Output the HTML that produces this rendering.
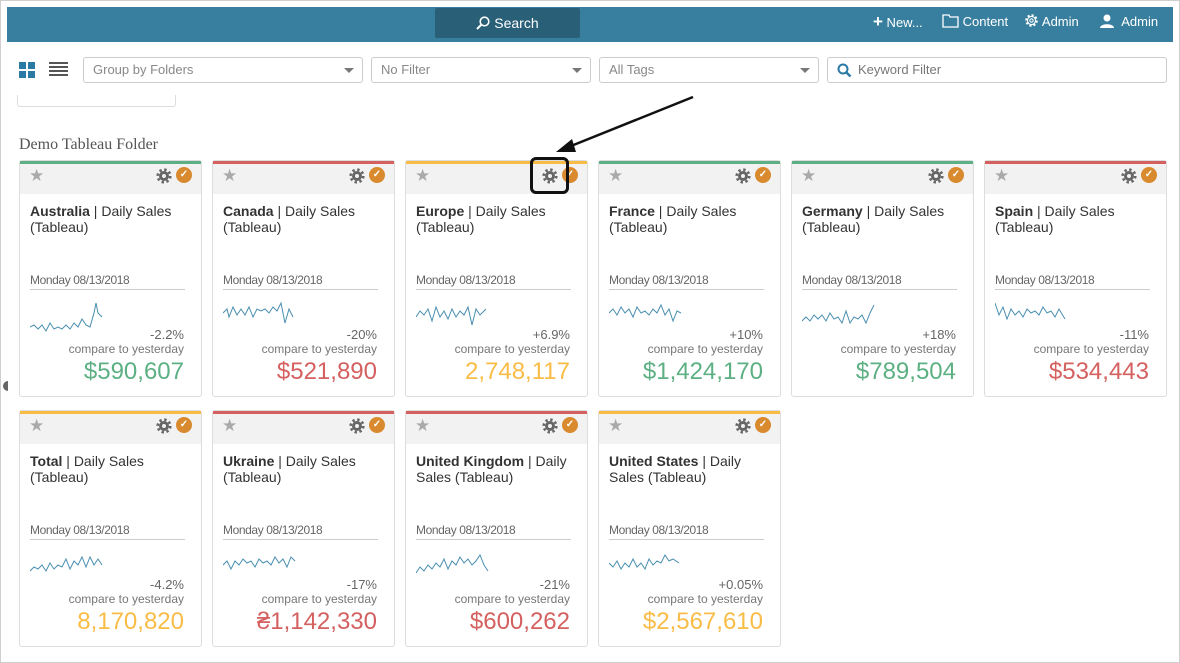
<!DOCTYPE html>
<html><head><meta charset="utf-8"><style>
*{box-sizing:border-box;margin:0;padding:0}
body{width:1180px;height:663px;background:#fff;font-family:"Liberation Sans",sans-serif;position:relative;overflow:hidden}
.frame{position:absolute;left:0;top:0;width:1180px;height:663px;border:1px solid #cfcfcf;pointer-events:none}
.hdr{position:absolute;left:7px;top:7px;width:1166px;height:35px;background:#387f9f}
.search{position:absolute;left:428px;top:1px;width:145px;height:30px;background:#2a5f78;border-radius:2px;color:#fff;font-size:14px;text-align:center;line-height:30px}
.nav{position:absolute;top:0;color:#fff;font-size:13px;line-height:29px}
.sel{position:absolute;top:57px;height:26px;border:1px solid #ccc;border-radius:3px;font-size:13px;color:#888;line-height:24px;padding-left:9px}
.sel .c{position:absolute;right:8px;top:10px;border-left:5px solid transparent;border-right:5px solid transparent;border-top:5px solid #777}
.card{position:absolute;width:183px;height:237px;border:1px solid #ddd;border-radius:3px;background:#fff}
.card .bar{height:33px;background:#f2f2f2;border-top:3px solid}
.star{position:absolute;left:9px;top:5px;color:#aaa;font-size:17px}
.gear{position:absolute;left:136px;top:7px;width:16px;height:16px}
.chk{position:absolute;left:156px;top:6px;width:16px;height:16px;border-radius:50%;background:#d98a2e;color:#fff;font-size:10px;text-align:center;line-height:16px;font-weight:bold}
.t{position:absolute;left:10px;top:42px;width:168px;font-size:14px;line-height:16px;color:#333}
.d{position:absolute;left:10px;top:112px;width:155px;font-size:12px;color:#666;letter-spacing:-.4px;border-bottom:1px solid #ccc;padding-bottom:2px}
.sp{position:absolute;left:10px;top:140px}
.p{position:absolute;right:17px;top:166px;font-size:13px;color:#666}
.cmp{position:absolute;right:17px;top:181px;font-size:12px;color:#777}
.v{position:absolute;right:17px;top:197px;font-size:24px}
.g{color:#5cb083}.r{color:#d4605f}.y{color:#f9bc46}
</style></head><body>
<div class="hdr">
<div class="search"><svg width="14" height="14" viewBox="0 0 14 14" style="vertical-align:-2px"><circle cx="8.5" cy="5.5" r="4.3" fill="none" stroke="#fff" stroke-width="1.6"/><line x1="5.5" y1="8.5" x2="1" y2="13" stroke="#fff" stroke-width="2"/></svg> Search</div>
<div class="nav" style="left:866px"><b style="font-size:17px">+</b> New...</div>
<div class="nav" style="left:935px"><svg width="17" height="14" viewBox="0 0 17 14" style="vertical-align:-2px"><path d="M1 1h6l1 2h8v10H1z" fill="none" stroke="#fff" stroke-width="1.3"/></svg> Content</div>
<div class="nav" style="left:1017px"><svg width="15" height="15" viewBox="0 0 16 16" style="vertical-align:-2px"><circle cx="8" cy="8" r="5.5" fill="none" stroke="#fff" stroke-width="2.4" stroke-dasharray="2.2 2.1"/><circle cx="8" cy="8" r="4.3" fill="none" stroke="#fff" stroke-width="1.2"/><circle cx="8" cy="8" r="1.8" fill="none" stroke="#fff" stroke-width="1.1"/></svg> Admin</div>
<div class="nav" style="left:1093px"><svg width="14" height="14" viewBox="0 0 14 14" style="vertical-align:-2px"><circle cx="7" cy="4" r="3.5" fill="#fff"/><path d="M0 14c0-5 14-5 14 0z" fill="#fff"/></svg> &nbsp;Admin</div>
</div>
<svg style="position:absolute;left:19px;top:62px" width="16" height="16"><rect x="0" y="0" width="7" height="7" fill="#2b7aa6"/><rect x="9" y="0" width="7" height="7" fill="#2b7aa6"/><rect x="0" y="9" width="7" height="7" fill="#2b7aa6"/><rect x="9" y="9" width="7" height="7" fill="#2b7aa6"/></svg>
<svg style="position:absolute;left:49px;top:62px" width="19" height="16"><g fill="#555"><rect y="0" width="19" height="2"/><rect y="4" width="19" height="2"/><rect y="8" width="19" height="2"/><rect y="12" width="19" height="2"/></g></svg>
<div class="sel" style="left:83px;width:280px">Group by Folders<span class="c"></span></div>
<div class="sel" style="left:371px;width:220px">No Filter<span class="c"></span></div>
<div class="sel" style="left:599px;width:220px">All Tags<span class="c"></span></div>
<div class="sel" style="left:827px;width:340px;padding-left:30px;color:#777">Keyword Filter<svg style="position:absolute;left:9px;top:5px" width="15" height="15"><circle cx="6" cy="6" r="4.5" fill="none" stroke="#2b7aa6" stroke-width="2"/><line x1="9.5" y1="9.5" x2="13.5" y2="13.5" stroke="#2b7aa6" stroke-width="2.4"/></svg></div>
<div style="position:absolute;left:17px;top:95px;width:159px;height:12px;border:1px solid #ddd;border-top:none;border-radius:0 0 3px 3px"></div>
<div style="position:absolute;left:19px;top:136px;font-family:'Liberation Serif',serif;font-size:16px;color:#555">Demo Tableau Folder</div>
<div style="position:absolute;left:3px;top:381px;width:5px;height:10px;background:#666;border-radius:5px 0 0 5px"></div>

<svg width="0" height="0" style="position:absolute"><defs><symbol id="gr" viewBox="0 0 16 16"><circle cx="8" cy="8" r="6.3" fill="none" stroke="#666" stroke-width="2.6" stroke-dasharray="2.4 2.55"/><circle cx="8" cy="8" r="5" fill="#666"/><circle cx="8" cy="8" r="2" fill="#f2f2f2"/></symbol></defs></svg>

<div class="card" style="left:19px;top:160px"><div class="bar" style="border-color:#5cb083"></div><span class="star">★</span><svg class="gear"><use href="#gr"/></svg><span class="chk">✓</span>
<div class="t"><b>Australia</b> | Daily Sales (Tableau)</div><div class="d">Monday 08/13/2018</div>
<svg class="sp" width="80" height="40"><polyline fill="none" stroke="#4a8fb0" points="0,26 4,24 8,28 12,24 16,30 20,22 24,28 28,26 32,28 36,24 40,28 44,22 48,26 52,18 56,24 60,26 64,12 66,2 68,12 72,16"/></svg>
<div class="p">-2.2%</div><div class="cmp">compare to yesterday</div><div class="v g">$590,607</div></div>

<div class="card" style="left:212px;top:160px"><div class="bar" style="border-color:#d4605f"></div><span class="star">★</span><svg class="gear"><use href="#gr"/></svg><span class="chk">✓</span>
<div class="t"><b>Canada</b> | Daily Sales (Tableau)</div><div class="d">Monday 08/13/2018</div>
<svg class="sp" width="80" height="40"><polyline fill="none" stroke="#4a8fb0" points="0,12 4,8 6,16 10,6 14,14 18,8 22,14 26,6 30,16 34,8 38,10 42,8 46,12 50,6 54,10 58,2 62,22 66,8 70,16"/></svg>
<div class="p">-20%</div><div class="cmp">compare to yesterday</div><div class="v r">$521,890</div></div>

<div class="card" style="left:405px;top:160px"><div class="bar" style="border-color:#f9bc46"></div><span class="star">★</span><svg class="gear"><use href="#gr"/></svg><span class="chk">✓</span>
<div class="t"><b>Europe</b> | Daily Sales (Tableau)</div><div class="d">Monday 08/13/2018</div>
<svg class="sp" width="80" height="40"><polyline fill="none" stroke="#4a8fb0" points="0,16 4,10 8,14 12,8 16,20 20,6 24,16 28,10 32,18 36,8 40,16 44,10 48,14 52,6 56,24 60,8 64,14 70,8"/></svg>
<div class="p">+6.9%</div><div class="cmp">compare to yesterday</div><div class="v y">2,748,117</div></div>

<div class="card" style="left:598px;top:160px"><div class="bar" style="border-color:#5cb083"></div><span class="star">★</span><svg class="gear"><use href="#gr"/></svg><span class="chk">✓</span>
<div class="t"><b>France</b> | Daily Sales (Tableau)</div><div class="d">Monday 08/13/2018</div>
<svg class="sp" width="80" height="40"><polyline fill="none" stroke="#4a8fb0" points="0,12 4,8 8,14 12,6 16,12 20,8 24,16 28,6 32,12 36,10 40,14 44,8 48,12 52,4 56,14 60,8 64,20 68,10 72,12"/></svg>
<div class="p">+10%</div><div class="cmp">compare to yesterday</div><div class="v g">$1,424,170</div></div>

<div class="card" style="left:791px;top:160px"><div class="bar" style="border-color:#5cb083"></div><span class="star">★</span><svg class="gear"><use href="#gr"/></svg><span class="chk">✓</span>
<div class="t"><b>Germany</b> | Daily Sales (Tableau)</div><div class="d">Monday 08/13/2018</div>
<svg class="sp" width="80" height="40"><polyline fill="none" stroke="#4a8fb0" points="0,20 4,16 8,20 12,14 16,18 20,14 24,20 28,12 32,18 36,16 40,22 44,10 48,22 52,16 56,18 60,14 64,22 68,12 72,4"/></svg>
<div class="p">+18%</div><div class="cmp">compare to yesterday</div><div class="v g">$789,504</div></div>

<div class="card" style="left:984px;top:160px"><div class="bar" style="border-color:#d4605f"></div><span class="star">★</span><svg class="gear"><use href="#gr"/></svg><span class="chk">✓</span>
<div class="t"><b>Spain</b> | Daily Sales (Tableau)</div><div class="d">Monday 08/13/2018</div>
<svg class="sp" width="80" height="40"><polyline fill="none" stroke="#4a8fb0" points="0,2 4,14 8,6 12,18 16,8 20,14 24,10 28,16 32,8 36,12 40,10 44,14 48,6 52,12 56,10 60,16 64,8 70,18"/></svg>
<div class="p">-11%</div><div class="cmp">compare to yesterday</div><div class="v r">$534,443</div></div>

<div class="card" style="left:19px;top:410px"><div class="bar" style="border-color:#f9bc46"></div><span class="star">★</span><svg class="gear"><use href="#gr"/></svg><span class="chk">✓</span>
<div class="t"><b>Total</b> | Daily Sales (Tableau)</div><div class="d">Monday 08/13/2018</div>
<svg class="sp" width="80" height="40"><polyline fill="none" stroke="#4a8fb0" points="0,20 4,16 8,18 12,14 16,20 20,12 24,18 28,14 32,16 36,8 40,18 44,10 48,14 52,6 56,16 60,6 64,14 68,8 72,14"/></svg>
<div class="p">-4.2%</div><div class="cmp">compare to yesterday</div><div class="v y">8,170,820</div></div>

<div class="card" style="left:212px;top:410px"><div class="bar" style="border-color:#d4605f"></div><span class="star">★</span><svg class="gear"><use href="#gr"/></svg><span class="chk">✓</span>
<div class="t"><b>Ukraine</b> | Daily Sales (Tableau)</div><div class="d">Monday 08/13/2018</div>
<svg class="sp" width="80" height="40"><polyline fill="none" stroke="#4a8fb0" points="0,14 4,10 8,18 12,10 16,14 20,8 24,12 28,10 32,16 36,8 40,12 44,10 48,14 52,6 56,12 60,8 64,16 68,6 72,10"/></svg>
<div class="p">-17%</div><div class="cmp">compare to yesterday</div><div class="v r">₴1,142,330</div></div>

<div class="card" style="left:405px;top:410px"><div class="bar" style="border-color:#d4605f"></div><span class="star">★</span><svg class="gear"><use href="#gr"/></svg><span class="chk">✓</span>
<div class="t"><b>United Kingdom</b> | Daily Sales (Tableau)</div><div class="d">Monday 08/13/2018</div>
<svg class="sp" width="80" height="40"><polyline fill="none" stroke="#4a8fb0" points="0,22 4,16 8,20 12,14 16,18 20,12 24,16 28,8 32,18 36,10 40,14 44,6 48,12 52,8 56,14 60,10 64,4 68,14 72,20"/></svg>
<div class="p">-21%</div><div class="cmp">compare to yesterday</div><div class="v r">$600,262</div></div>

<div class="card" style="left:598px;top:410px"><div class="bar" style="border-color:#f9bc46"></div><span class="star">★</span><svg class="gear"><use href="#gr"/></svg><span class="chk">✓</span>
<div class="t"><b>United States</b> | Daily Sales (Tableau)</div><div class="d">Monday 08/13/2018</div>
<svg class="sp" width="80" height="40"><polyline fill="none" stroke="#4a8fb0" points="0,12 4,16 8,10 12,18 16,12 20,16 24,8 28,16 32,12 36,18 40,8 44,14 48,10 52,12 56,4 60,10 64,8 70,12"/></svg>
<div class="p">+0.05%</div><div class="cmp">compare to yesterday</div><div class="v y">$2,567,610</div></div>

<div style="position:absolute;left:530px;top:157px;width:39px;height:37px;border:3px solid #111;border-radius:6px"></div>
<svg style="position:absolute;left:0;top:0" width="1180" height="663"><line x1="693" y1="97" x2="566" y2="148" stroke="#111" stroke-width="2.5"/><polygon points="556,152 572,139 576,152" fill="#111"/></svg>
<div class="frame"></div>
</body></html>
